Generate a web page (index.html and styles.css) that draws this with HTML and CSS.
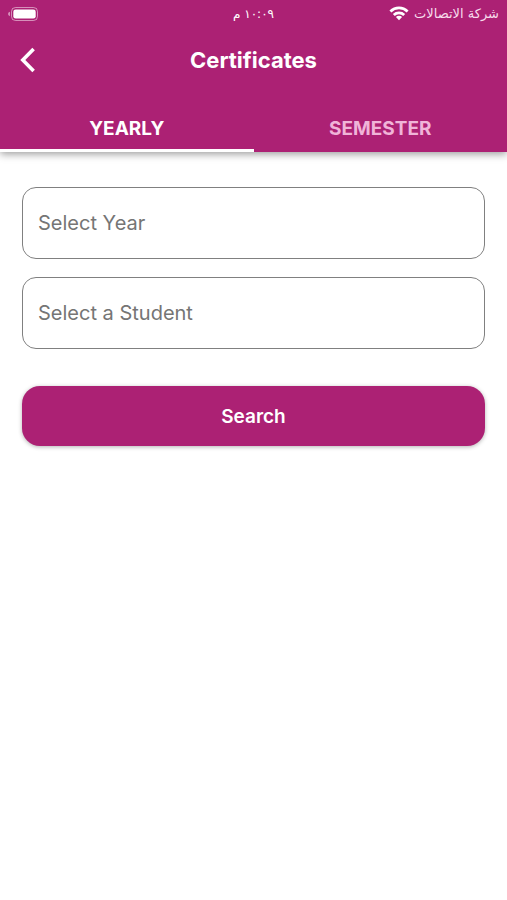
FILE: index.html
```html
<!DOCTYPE html>
<html lang="en">
<head>
  <meta charset="utf-8">
  <meta name="viewport" content="width=device-width, initial-scale=1.0">
  <title>Certificates</title>
  <link rel="stylesheet" href="styles.css">
</head>
<body>
  <header class="app-bar">
    <div class="status" dir="rtl" lang="ar">
      <div class="carrier">
        <span>شركة الاتصالات</span>
        <svg class="wifi" width="20" height="15" viewBox="0 0 20 15" aria-hidden="true">
          <g fill="none" stroke="#fff" stroke-width="2.8">
            <path d="M1.4 5.4 A12.4 12.4 0 0 1 18.6 5.4"/>
            <path d="M4.8 9 A7.5 7.5 0 0 1 15.2 9"/>
          </g>
          <path d="M10 14.2 L6.9 11.1 A4.4 4.4 0 0 1 13.1 11.1 Z" fill="#fff"/>
        </svg>
      </div>
      <time class="clock">١٠:٠٩ م</time>
      <div class="power">
        <svg width="30" height="14" viewBox="0 0 30 14" aria-hidden="true">
          <rect x="3.5" y="0.5" width="26" height="13" rx="4" fill="none" stroke="#fff" stroke-opacity=".5"/>
          <rect x="5.3" y="2.4" width="22.4" height="9.2" rx="2.4" fill="#fff"/>
          <path d="M2 4.8 Q0 5.4 0 7 Q0 8.6 2 9.2 Z" fill="#fff" fill-opacity=".5"/>
        </svg>
      </div>
    </div>

    <div class="title-row">
      <button class="back" type="button" aria-label="Back">
        <svg width="16" height="26" viewBox="0 0 16 26" aria-hidden="true">
          <path d="M13.6 2 L2.8 13 L13.6 24" fill="none" stroke="#fff" stroke-width="3.6"/>
        </svg>
      </button>
      <h1>Certificates</h1>
    </div>

    <div class="tabs" role="tablist">
      <button class="tab active" type="button" role="tab" aria-selected="true">YEARLY</button>
      <button class="tab" type="button" role="tab" aria-selected="false">SEMESTER</button>
    </div>
  </header>

  <main>
    <form class="search-form">
      <select class="field" name="year" aria-label="Year">
        <option value="">Select Year</option>
      </select>
      <select class="field" name="student" aria-label="Student">
        <option value="">Select a Student</option>
      </select>
      <button class="search" type="button">Search</button>
    </form>
  </main>
</body>
</html>
```

FILE: styles.css
```css
* {
  box-sizing: border-box;
}

body {
  margin: 0;
  background-color: #fff;
  font-family: Inter, "Liberation Sans", sans-serif;
}

button {
  padding: 0;
  border: 0;
  background: none;
  color: #fff;
  font-family: inherit;
}

svg {
  display: block;
}

.app-bar {
  background-color: #ac2174;
  color: #fff;
  box-shadow: 0 2px 8px rgba(0, 0, 0, 0.4);
}

/* status bar */
.status {
  display: grid;
  grid-template-columns: 1fr auto 1fr;
  align-items: center;
  height: 27px;
  padding: 0 8px;
  font-family: "DejaVu Sans", sans-serif;
  font-size: 13px;
}

.carrier {
  display: flex;
  align-items: center;
  gap: 5px;
  color: #f7dcec;
}

.clock {
  font-size: 12px;
}

.power {
  justify-self: end;
}

/* title */
.title-row {
  display: grid;
  grid-template-columns: 56px 1fr 56px;
  align-items: center;
  height: 65px;
}

.back {
  display: flex;
  align-items: center;
  height: 48px;
  padding-left: 20px;
}

h1 {
  margin: 0;
  font-size: 22px;
  font-weight: 700;
  text-align: center;
}

/* tabs */
.tabs {
  display: flex;
}

.tab {
  flex: 1;
  height: 60px;
  padding-top: 16px;
  border-bottom: 3px solid transparent;
  color: #f0b4d8;
  font-size: 19px;
  font-weight: 700;
}

.tab.active {
  border-bottom-color: #fff;
  color: #fff;
}

/* form */
.search-form {
  display: flex;
  flex-direction: column;
  gap: 18px;
  padding: 35px 22px;
}

.field {
  appearance: none;
  width: 100%;
  height: 72px;
  padding: 0 15px;
  border: 1px solid #808080;
  border-radius: 14px;
  background-color: #fff;
  color: #757575;
  font-family: inherit;
  font-size: 20px;
}

.search {
  height: 60px;
  margin-top: 19px;
  border-radius: 18px;
  background-color: #ac2174;
  box-shadow: 0 1px 4px rgba(0, 0, 0, 0.3);
  font-size: 19px;
  font-weight: 600;
}
```
